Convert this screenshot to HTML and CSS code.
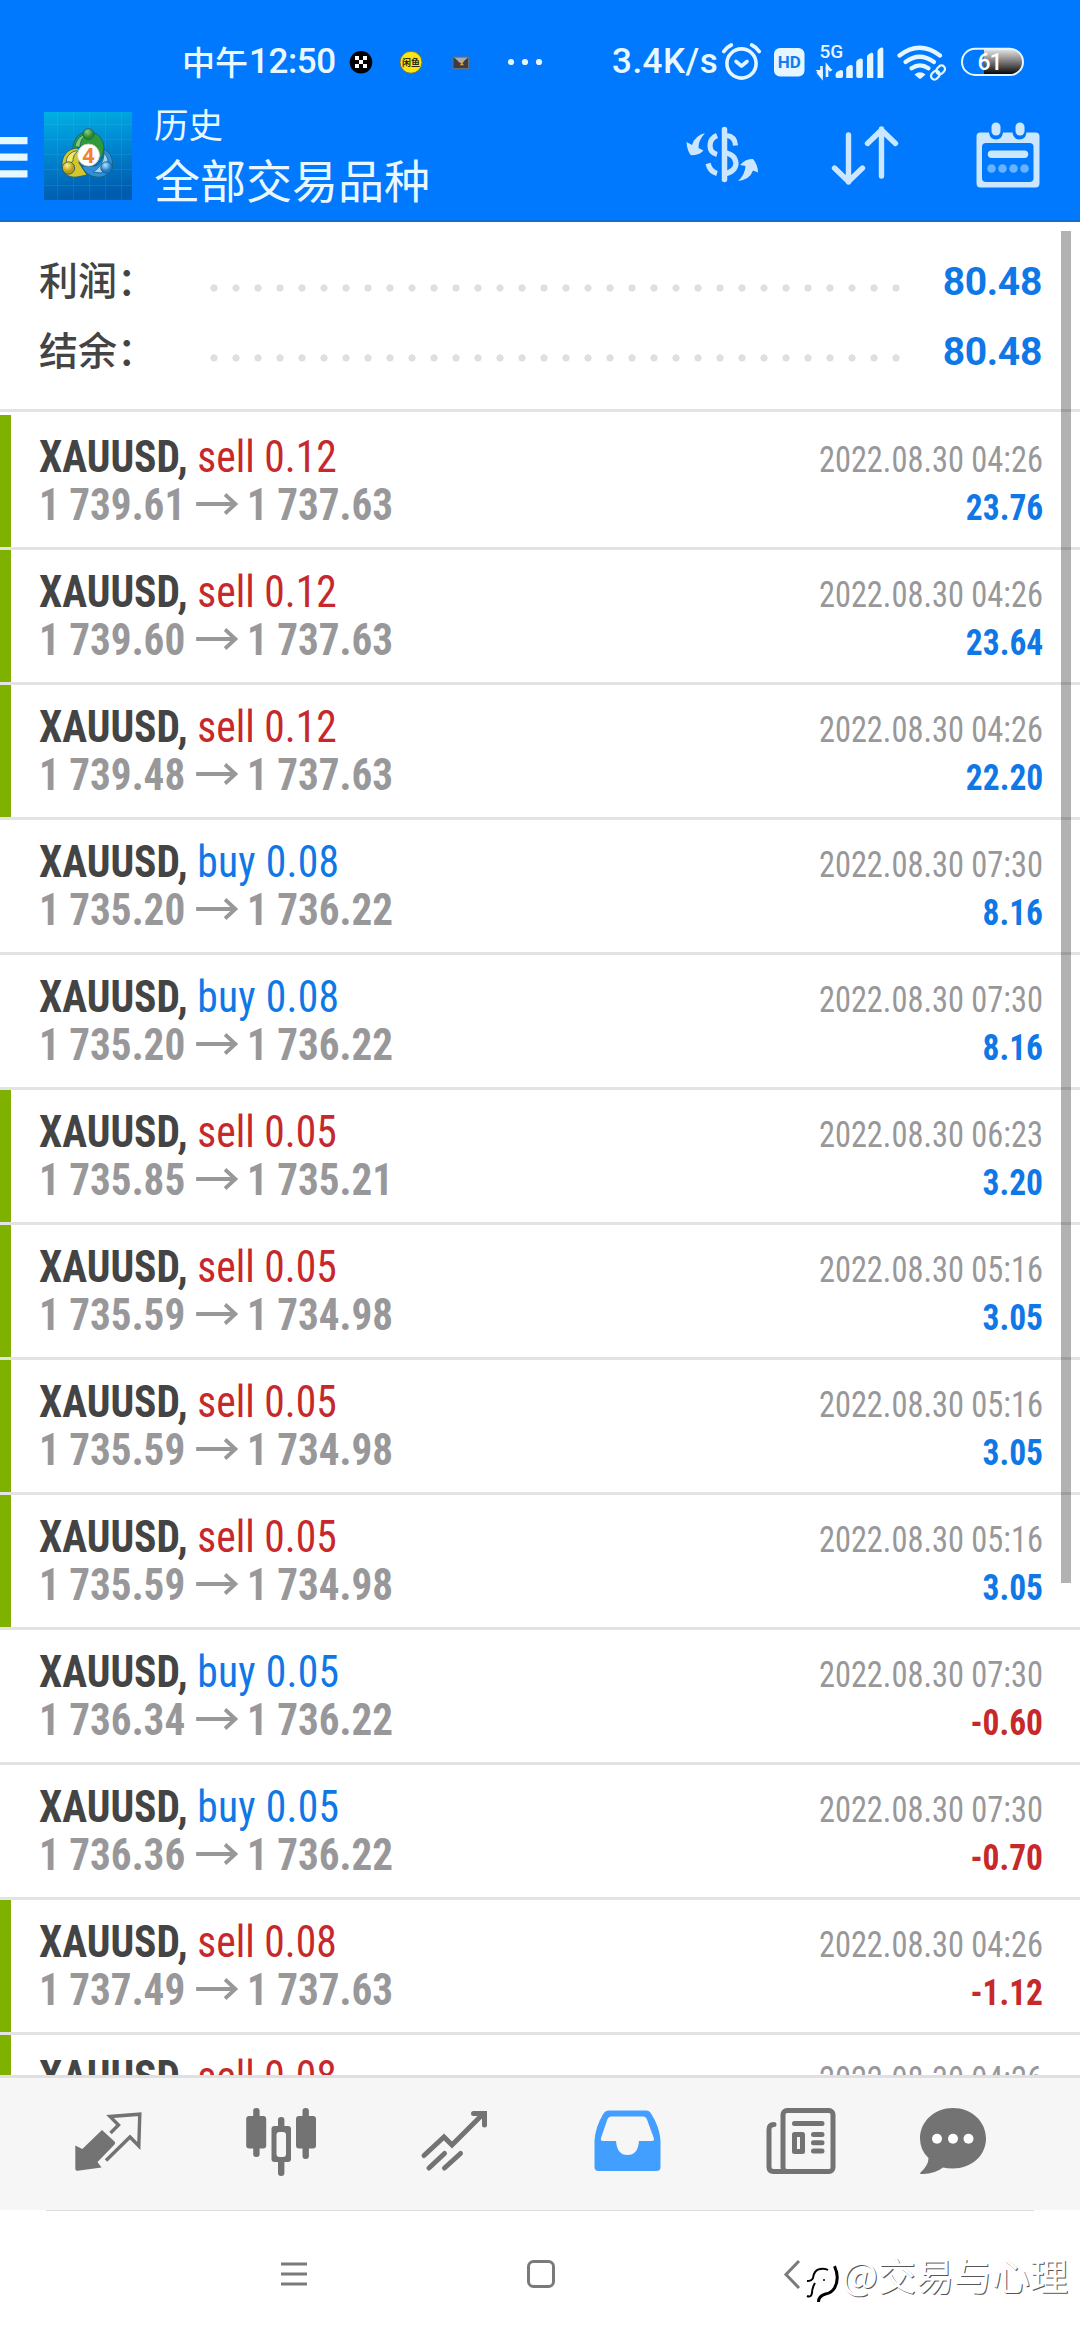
FILE: index.html
```html
<!DOCTYPE html>
<html lang="zh-CN">
<head>
<meta charset="utf-8">
<title>历史</title>
<link rel="stylesheet" href="styles.css">
</head>
<body>
<div class="screen">
  <header class="header">
    <div class="statusbar">
      <span class="clock"><span class="clock-cjk">中午</span>12:50</span>
      <svg class="notices" width="200" height="44" viewBox="345 40 200 44">
        <circle cx="361" cy="62.3" r="11.3" fill="#000"/>
        <path fill="#fff" d="M355 56h4v4h-4zM363 56h4v4h-4zM359 60h4v4h-4zM355 64h4v4h-4zM363 64h4v4h-4z"/>
        <circle cx="411" cy="62.300" r="11" fill="#ffe414" stroke="#6d7b3c" stroke-width="1"/>
        <text x="411" y="66" text-anchor="middle" class="fish" textLength="18">闲鱼</text>
        <path fill="#3a3d44" stroke="#6b6f7a" stroke-width="1" d="M453 57h15.500v11.500H453z"/>
        <path fill="#a3adba" d="M454 57.500h14l-7 6z"/><path d="M458.500 61.500h4.500l-2 3h2.500" stroke="#e8a04a" stroke-width="1.300" fill="none"/>
        <g fill="#e6f6ff"><circle cx="511" cy="62" r="3.100"/><circle cx="525" cy="62" r="3.100"/><circle cx="539" cy="62" r="3.100"/></g>
      </svg>
      <span class="speed">3.4K/s</span>
      <svg class="signals" width="306" height="44" viewBox="720 40 306 44" fill="none" stroke="#e4f6ff">
        <circle cx="741.500" cy="63.500" r="14.600" stroke-width="3.600"/>
        <path d="M736 61.500l5.500 4.500 5.500-4.500" stroke-width="3.600" stroke-linecap="round" stroke-linejoin="round"/>
        <path d="M723.800 51.500q3-4.500 7.500-6.500M759.200 51.500q-3-4.500-7.500-6.500" stroke-width="3.800" stroke-linecap="round"/>
        <rect x="774" y="48" width="30.500" height="28.500" rx="6" fill="#e4f6ff" stroke="none"/>
        <text x="789.200" y="67.800" text-anchor="middle" class="hd">HD</text>
        <text x="819.500" y="57.500" class="net">5G</text>
        <path d="M821.500 66v11l-4-5M827 77V66l4 5" stroke-width="2.600"/>
        <path fill="#e4f6ff" stroke="none" d="M815.500 70h7.300v7.500zM833 70h-7.300v-3.500z"/>
        <g fill="#e4f6ff" stroke="none">
          <path d="M835.500 75q0-3 3-4l2.500-1q2 0 2 1.500V76q0 2-2 2h-3.500q-2 0-2-2z"/>
          <path d="M846.200 69q0-2 2-3l2-1q2.600-.5 2.600 1.500V78h-6.600z"/>
          <path d="M856.200 62.500q0-2 2-3l2-1q2.600-.5 2.600 1.500V76q0 2-2 2h-2.600q-2 0-2-2z"/>
          <path d="M867 57q0-2 2-3l2.300-1.200q2-.5 2 1.500V78H867z"/>
          <path d="M877.500 51.500q0-2 2-3l1.800-1q2-.5 2 1.500V78h-5.800z"/>
        </g>
        <g stroke-width="4.200" stroke-linecap="round">
          <path d="M899.500 55.500q20-15.500 40.500 0"/><path d="M905.500 62q14-10.500 28.500 0"/><path d="M911.500 68.300q8.500-6 17 0"/>
        </g>
        <path fill="#e4f6ff" stroke="none" d="M914.500 74.500q5.500-4.500 11 0l-4.500 4q-1 .7-2 0z"/>
        <g fill="none" stroke-width="2.200" transform="rotate(-45 938 72.500)"><rect x="929.500" y="69" width="9.500" height="7" rx="3.500"/><rect x="937" y="69" width="9.500" height="7" rx="3.500"/></g>
        <defs><linearGradient id="charge" x1="0" y1="0" x2="0" y2="1"><stop offset="0" stop-color="#e8e8e8"/><stop offset=".5" stop-color="#777"/><stop offset="1" stop-color="#000"/></linearGradient></defs>
        <path d="M984 49h25.500a13 13 0 010 26H984z" fill="url(#charge)" stroke="none"/>
        <rect x="962" y="48.800" width="61" height="26.200" rx="13.100" stroke-width="2"/>
        <text x="989.500" y="70" text-anchor="middle" class="level">61</text>
      </svg>
    </div>
    <div class="appbar">
      <svg width="28" height="44" viewBox="0 0 28 44" fill="#e6f7ff"><path d="M0 0h27.500v7.300H0zM0 16.500h27.500v7.300H0zM0 33.300h27.500v7.300H0z"/></svg>
      <svg class="logo" width="88" height="88" viewBox="0 0 88 88">
        <defs>
          <linearGradient id="sea" x1="0" y1="0" x2=".15" y2="1"><stop offset="0" stop-color="#00b1e3"/><stop offset=".45" stop-color="#0089d2"/><stop offset="1" stop-color="#005cae"/></linearGradient>
          <radialGradient id="gg" cx=".4" cy=".3"><stop offset="0" stop-color="#8fd080"/><stop offset="1" stop-color="#2b8a2f"/></radialGradient>
          <radialGradient id="yy" cx=".4" cy=".3"><stop offset="0" stop-color="#fff08a"/><stop offset="1" stop-color="#b79a10"/></radialGradient>
          <radialGradient id="bb" cx=".4" cy=".3"><stop offset="0" stop-color="#b5e4ff"/><stop offset="1" stop-color="#1c78c8"/></radialGradient>
        </defs>
        <path fill="url(#sea)" d="M0 0h88v88H0z"/>
        <path stroke="#5fd0ff" stroke-opacity=".14" d="M13.500 0v88M29.500 0v88M45.500 0v88M61.500 0v88M77.500 0v88M0 12.500h88M0 27.500h88M0 42.500h88M0 57.500h88M0 73.500h88"/>
        <g stroke="#1a5a6a" stroke-width=".8">
          <path fill="#2f9a3c" d="M29 40c-1-13 6-20 15.500-20S60 27 60 37l-2 8-5 2-9-12-10 0z"/>
          <path fill="#7ccb6c" d="M31 35c1-8 6-12 12-13-5 4-7 8-7 13z"/>
          <path fill="#d4c62c" d="M33 36c-10 1-15 8-15 17 0 8 6 13 15 12l10-2-8-12 1-12z"/>
          <path fill="#f3ea6a" d="M31 39c-8 3-10 9-8 15l6-5c0-4 1-7 5-10z"/>
          <path fill="#2f8fdb" d="M60 37c7 4 9 10 8 17-1 8-8 12-16 11-7-1-12-5-14-11l14 0c5-3 8-9 8-17z"/>
          <path fill="#9ad6f8" d="M60 41c4 4 5 9 3 14l-6 6-8-1c7-4 11-11 11-19z"/>
          <circle cx="44.500" cy="22" r="5.500" fill="url(#gg)"/><circle cx="24.500" cy="56" r="6.200" fill="url(#yy)"/><circle cx="62.500" cy="55.500" r="5.800" fill="url(#bb)"/>
          <circle cx="44.500" cy="43" r="11" fill="#fff" stroke="#d8c9b8"/>
        </g>
        <text x="44.500" y="50.500" text-anchor="middle" class="four">4</text>
      </svg>
      <div class="titles"><div class="title">历史</div><div class="subtitle">全部交易品种</div></div>
      <svg class="actions" width="360" height="80" viewBox="684 115 360 80" fill="none" stroke="#cbe6ff" stroke-linecap="round" stroke-linejoin="round">
        <path d="M724.500 129.500v50" stroke-width="5.500"/>
        <g stroke-width="5.200" stroke-linecap="butt"><path d="M717 135.500q-7 3-7 10t7 9M717 173.500q-7-2-9-10"/><path d="M727 135.500q8 1 8.500 10" /><path d="M724.500 152.500q11 2 11.500 11-.5 8-11.500 10.500"/></g>
        <path fill="#cbe6ff" stroke="none" d="M705 133q-7 8-6.500 15l5 2.500q-5 5.500-13 4.500-3.500-5-4-13l5.500 3q3-9.500 13-12zM738 181q7-6 7.500-15l-5.500-1q6-7 13-6 5 6 5 13.500l-5-2q-3 9-15 10.500z"/>
        <path d="M848.500 135v47M834.500 168l14 13.500 14-13.500M881.500 176v-47M867.500 143.500l14-13.500 14 13.500" stroke-width="5.400"/>
        <path fill="#cbe6ff" stroke="none" fill-rule="evenodd" d="M980.500 132.500h8.500q1 7 7 7t7-7h9.500q1 7 7 7t7-7h9q4 0 4 4V183q0 4.500-4 4.500h-55q-4 0-4-4.500v-46.500q0-4 4-4zM986 143q-4 0-4 4v31q0 4 4 4h43.500q4 0 4-4v-31q0-4-4-4z"/>
        <rect x="991.500" y="122.500" width="9" height="13" rx="4.500" fill="#cbe6ff" stroke="none"/><rect x="1015.500" y="122.500" width="9" height="13" rx="4.500" fill="#cbe6ff" stroke="none"/>
        <path d="M991.500 154.300h33" stroke-width="7.400"/>
        <g fill="#66b3ff" stroke="none"><circle cx="991.500" cy="168.500" r="4.300"/><circle cx="1002.500" cy="168.500" r="4.300"/><circle cx="1013.500" cy="168.500" r="4.300"/><circle cx="1024.500" cy="168.500" r="4.300"/></g>
      </svg>
    </div>
  </header>

  <main class="content">
    <section class="summary">
      <div class="total"><span class="label">利润：</span><span class="dots"></span><span class="sum">80.48</span></div>
      <div class="total"><span class="label">结余：</span><span class="dots"></span><span class="sum">80.48</span></div>
    </section>
    <section class="deals">
      <article class="deal mark"><div class="line"><span class="name"><b>XAUUSD,</b> <i class="sell">sell 0.12</i></span><time>2022.08.30 04:26</time></div><div class="line"><span class="price">1 739.61<svg class="to" viewBox="0 0 45 22"><path d="M0 11h43M31 1.500l11 9.500-11 9.500"/></svg>1 737.63</span><b class="gain">23.76</b></div></article>
      <article class="deal mark"><div class="line"><span class="name"><b>XAUUSD,</b> <i class="sell">sell 0.12</i></span><time>2022.08.30 04:26</time></div><div class="line"><span class="price">1 739.60<svg class="to" viewBox="0 0 45 22"><path d="M0 11h43M31 1.500l11 9.500-11 9.500"/></svg>1 737.63</span><b class="gain">23.64</b></div></article>
      <article class="deal mark"><div class="line"><span class="name"><b>XAUUSD,</b> <i class="sell">sell 0.12</i></span><time>2022.08.30 04:26</time></div><div class="line"><span class="price">1 739.48<svg class="to" viewBox="0 0 45 22"><path d="M0 11h43M31 1.500l11 9.500-11 9.500"/></svg>1 737.63</span><b class="gain">22.20</b></div></article>
      <article class="deal"><div class="line"><span class="name"><b>XAUUSD,</b> <i class="buy">buy 0.08</i></span><time>2022.08.30 07:30</time></div><div class="line"><span class="price">1 735.20<svg class="to" viewBox="0 0 45 22"><path d="M0 11h43M31 1.500l11 9.500-11 9.500"/></svg>1 736.22</span><b class="gain">8.16</b></div></article>
      <article class="deal"><div class="line"><span class="name"><b>XAUUSD,</b> <i class="buy">buy 0.08</i></span><time>2022.08.30 07:30</time></div><div class="line"><span class="price">1 735.20<svg class="to" viewBox="0 0 45 22"><path d="M0 11h43M31 1.500l11 9.500-11 9.500"/></svg>1 736.22</span><b class="gain">8.16</b></div></article>
      <article class="deal mark"><div class="line"><span class="name"><b>XAUUSD,</b> <i class="sell">sell 0.05</i></span><time>2022.08.30 06:23</time></div><div class="line"><span class="price">1 735.85<svg class="to" viewBox="0 0 45 22"><path d="M0 11h43M31 1.500l11 9.500-11 9.500"/></svg>1 735.21</span><b class="gain">3.20</b></div></article>
      <article class="deal mark"><div class="line"><span class="name"><b>XAUUSD,</b> <i class="sell">sell 0.05</i></span><time>2022.08.30 05:16</time></div><div class="line"><span class="price">1 735.59<svg class="to" viewBox="0 0 45 22"><path d="M0 11h43M31 1.500l11 9.500-11 9.500"/></svg>1 734.98</span><b class="gain">3.05</b></div></article>
      <article class="deal mark"><div class="line"><span class="name"><b>XAUUSD,</b> <i class="sell">sell 0.05</i></span><time>2022.08.30 05:16</time></div><div class="line"><span class="price">1 735.59<svg class="to" viewBox="0 0 45 22"><path d="M0 11h43M31 1.500l11 9.500-11 9.500"/></svg>1 734.98</span><b class="gain">3.05</b></div></article>
      <article class="deal mark"><div class="line"><span class="name"><b>XAUUSD,</b> <i class="sell">sell 0.05</i></span><time>2022.08.30 05:16</time></div><div class="line"><span class="price">1 735.59<svg class="to" viewBox="0 0 45 22"><path d="M0 11h43M31 1.500l11 9.500-11 9.500"/></svg>1 734.98</span><b class="gain">3.05</b></div></article>
      <article class="deal"><div class="line"><span class="name"><b>XAUUSD,</b> <i class="buy">buy 0.05</i></span><time>2022.08.30 07:30</time></div><div class="line"><span class="price">1 736.34<svg class="to" viewBox="0 0 45 22"><path d="M0 11h43M31 1.500l11 9.500-11 9.500"/></svg>1 736.22</span><b class="loss">-0.60</b></div></article>
      <article class="deal"><div class="line"><span class="name"><b>XAUUSD,</b> <i class="buy">buy 0.05</i></span><time>2022.08.30 07:30</time></div><div class="line"><span class="price">1 736.36<svg class="to" viewBox="0 0 45 22"><path d="M0 11h43M31 1.500l11 9.500-11 9.500"/></svg>1 736.22</span><b class="loss">-0.70</b></div></article>
      <article class="deal mark"><div class="line"><span class="name"><b>XAUUSD,</b> <i class="sell">sell 0.08</i></span><time>2022.08.30 04:26</time></div><div class="line"><span class="price">1 737.49<svg class="to" viewBox="0 0 45 22"><path d="M0 11h43M31 1.500l11 9.500-11 9.500"/></svg>1 737.63</span><b class="loss">-1.12</b></div></article>
      <article class="deal mark"><div class="line"><span class="name"><b>XAUUSD,</b> <i class="sell">sell 0.08</i></span><time>2022.08.30 04:26</time></div></article>
    </section>
    <div class="scrollbar"></div>
  </main>

  <nav class="tabs">
    <svg width="70" height="72" viewBox="73 2106 70 72" fill="none" stroke="#737373">
      <path fill="#737373" stroke="none" d="M102 2130l12.500 11.500q1.500 1.500 0 3l-17 17.500 4 5.500-24 3.300q-2.200.2-2.200-2V2145.500l7 3.500z"/>
      <path d="M110.500 2133l8-8-8.500-8.500 29.800-2.300-1 31.800-8.800-9L106 2160.500" stroke-width="3.400"/>
    </svg>
    <svg width="70" height="72" viewBox="246 2106 70 72" fill="#737373">
      <rect x="253.200" y="2108" width="6.400" height="49" rx="3"/><rect x="246.200" y="2116" width="20" height="32.500" rx="3"/>
      <rect x="278" y="2117" width="6.400" height="59" rx="3"/><rect x="271.500" y="2126" width="19.500" height="36" rx="3"/><rect x="276.500" y="2132" width="9.500" height="25" rx="3" fill="#f6f6f6"/>
      <rect x="302.500" y="2108" width="6.400" height="51" rx="3"/><rect x="296" y="2116" width="20" height="32.500" rx="3"/>
    </svg>
    <svg width="70" height="72" viewBox="419 2106 70 72" fill="none" stroke="#737373" stroke-width="5" stroke-linecap="round">
      <path d="M424 2155.500l20-18.500 8 8 31-31M473.500 2113.500h11v11.500M429 2168l15.500-14.500M444.500 2168l16-14.500"/>
    </svg>
    <svg width="70" height="72" viewBox="593 2106 70 72" fill="#429eff">
      <path fill-rule="evenodd" d="M609 2110.500h37q3.500 0 5 3 8.500 13 9.500 27V2167q0 4-4 4h-58q-4 0-4-4v-26.500q1-14 9-27 2-3 5.500-3zM611 2116.500q-2.500 0-3.500 2.500l-6.500 19q-.8 3 2 3h13q1 14 11.500 14t11.500-14h13q2.500 0 1.800-3l-7-19q-1-2.500-3.500-2.500z"/>
    </svg>
    <svg width="70" height="72" viewBox="766 2106 70 72" fill="none" stroke="#737373" stroke-linecap="round">
      <rect x="783" y="2110.500" width="50" height="61" rx="4" stroke-width="5"/>
      <path d="M774 2124.500q-5 0-5 5V2167q0 4.500 4.500 4.500H786" stroke-width="5"/>
      <path d="M794.500 2123.500h27.500M813.500 2134.500h8.500M813.500 2142.700h8.500M813.500 2151h8.500" stroke-width="5"/>
      <rect x="794.500" y="2134.500" width="8" height="17" stroke-width="5" stroke-linejoin="round"/>
    </svg>
    <svg width="70" height="72" viewBox="918 2106 70 72">
      <path fill="#737373" d="M953 2108c18 0 33 13 33 30.500s-15 30-33 30q-6 0-10-1-9 7-21.500 6.500-2 0-1-1.500 8-7 8-14.500-8.500-8-8.500-19.500c0-17.500 15-30.500 33-30.500z"/>
      <g fill="#fff"><circle cx="937" cy="2138.700" r="5"/><circle cx="953" cy="2138.700" r="5"/><circle cx="968.500" cy="2138.700" r="5"/></g>
    </svg>
  </nav>

  <footer class="sysnav">
    <svg width="34" height="34" viewBox="0 0 34 34"><path d="M4 6h26M4 16h26M4 26h26" /></svg>
    <svg width="34" height="34" viewBox="0 0 34 34"><rect x="4.500" y="3.500" width="25" height="25" rx="5"/></svg>
    <svg width="34" height="34" viewBox="0 0 34 34"><path d="M27 3L14 16.500 27 30"/></svg>
    <div class="watermark">
      <svg width="36" height="42" viewBox="806 2262 36 42" fill="none" stroke="#000">
        <path d="M808 2281q5 0 6-3 1-8 7-9 5-1 8 1M816 2283q-3 5-3 10-1 5-5 3" stroke-width="2"/>
        <path d="M835.500 2266q5.500 12 0 22-3 5-9 6-7 2-7 8" stroke-width="3"/><circle cx="825" cy="2280" r="1" fill="#000" stroke="none"/>
      </svg>
      <span>@交易与心理</span>
    </div>
  </footer>
</div>
</body>
</html>
```
FILE: styles.css
```css
* { box-sizing: border-box; }
body { margin: 0; background: #fff; font-family: Roboto, "Noto Sans CJK SC", sans-serif; }
svg { display: block; flex: none; }
.screen { width: 1080px; height: 2340px; display: flex; flex-direction: column; overflow: hidden; }

.header { height: 222px; background: #0079ff; border-bottom: 2px solid #146bd6; color: #e9f8ff; }
.statusbar { height: 84px; padding: 40px 0 0 182px; display: flex; align-items: flex-start; line-height: 44px; white-space: nowrap; }
.clock { width: 163px; font-size: 35px; font-weight: 500; letter-spacing: -.4px; display: flex; }
.clock-cjk { font-size: 33px; line-height: 42px; font-family: "Noto Sans CJK SC", sans-serif; letter-spacing: 0; margin-right: 1px; }
.speed { width: 108px; margin-left: 67px; font-size: 35px; font-weight: 500; letter-spacing: .5px; }
.fish { font: 700 9px "Noto Sans CJK SC", sans-serif; fill: #2a2a10; }
.hd { font: 700 17px Roboto, sans-serif; fill: #0f7df5; stroke: none; }
.net { font: 500 19px Roboto, sans-serif; fill: #e4f6ff; stroke: none; }
.level { font: 500 23px Roboto, sans-serif; fill: #fff; stroke: none; letter-spacing: -1px; }

.appbar { height: 136px; display: flex; align-items: flex-start; }
.appbar > svg:first-child { margin-top: 53px; }
.logo { margin: 28px 0 0 16px; }
.four { font: 700 21px "Open Sans", sans-serif; fill: #f08232; }
.titles { flex: 1; margin: 18px 0 0 22px; font-family: "Noto Sans CJK SC", sans-serif; white-space: nowrap; }
.title { font-size: 34.500px; line-height: 42px; }
.subtitle { font-size: 46px; line-height: 64px; margin-top: 2px; }
.actions { margin: 31px 36px 0 0; }

.content { position: relative; height: 1853px; overflow: hidden; }
.summary { height: 190px; padding: 23px 38px 0 39px; border-bottom: 3px solid #e3e3e5; }
.total { height: 70px; display: flex; align-items: center; }
.label { flex: none; width: 163.500px; font: 500 39px/70px "Noto Sans CJK SC", sans-serif; color: #444; white-space: nowrap; margin-top: -4px; }
.dots { flex: none; width: 704px; height: 8px; margin: 16px 0 0; background: radial-gradient(circle, #dfdfe0 3.300px, transparent 3.900px) 0 0 / 22px 8px; }
.sum { flex: 1; text-align: right; font-size: 39px; font-weight: 700; line-height: 70px; margin-top: 3px; letter-spacing: -.3px; color: #0f78e6; }

.deals { padding-top: 3px; }
.deal { height: 135px; padding: 18px 37px 0 39px; border-bottom: 3px solid #e3e3e5; background: linear-gradient(#fff, #fff) 0 0 / 11px 100% no-repeat; font-family: "Roboto Condensed", sans-serif; }
.deal.mark { background-image: linear-gradient(#7fb100, #7fb100); }
.line { height: 48px; line-height: 48px; display: flex; align-items: baseline; justify-content: space-between; font-size: 44px; color: #444; white-space: nowrap; }
.line i { font-style: normal; }
.sell { color: #c6282b; }
.buy { color: #0f78e6; letter-spacing: .3px; }
.name { transform: scaleX(.944); transform-origin: left; }
.line time { font-size: 36px; color: #98989a; transform: scaleX(.9); transform-origin: right; }
.price { font-weight: 700; color: #98989a; transform: scaleX(.935); transform-origin: left; }
.to { display: inline-block; width: 45px; height: 22px; margin: 0 9px 0 12px; vertical-align: 5px; fill: none; stroke: #98989a; stroke-width: 4px; }
.gain, .loss { font-size: 36px; color: #0f78e6; transform: scaleX(.93); transform-origin: right; }
.loss { color: #c6282b; }
.scrollbar { position: absolute; top: 9px; right: 9px; width: 10px; height: 1352px; background: rgba(0, 0, 0, .3); }

.tabs { height: 135px; padding: 28px 92px 0 73px; border-top: 3px solid #e0e0e2; background: #f6f6f6; display: grid; grid-template-columns: 173px 173px 174px 173px 152px 70px; }
.sysnav { position: relative; height: 130px; padding: 48px 0 0 276.500px; display: flex; gap: 213.500px; background: linear-gradient(#dcdcdc, #dcdcdc) 46px 0 / 988px 1px no-repeat; fill: none; stroke: #7a7a7a; stroke-width: 3px; }
.watermark { position: absolute; left: 805px; top: 52px; display: flex; align-items: flex-start; }
.watermark span { margin: -15px 0 0 1px; font: 400 38px/54px "Noto Sans CJK SC", sans-serif; color: #fff; text-shadow: 1px 1px 0 #555; white-space: nowrap; stroke: none; }
```
